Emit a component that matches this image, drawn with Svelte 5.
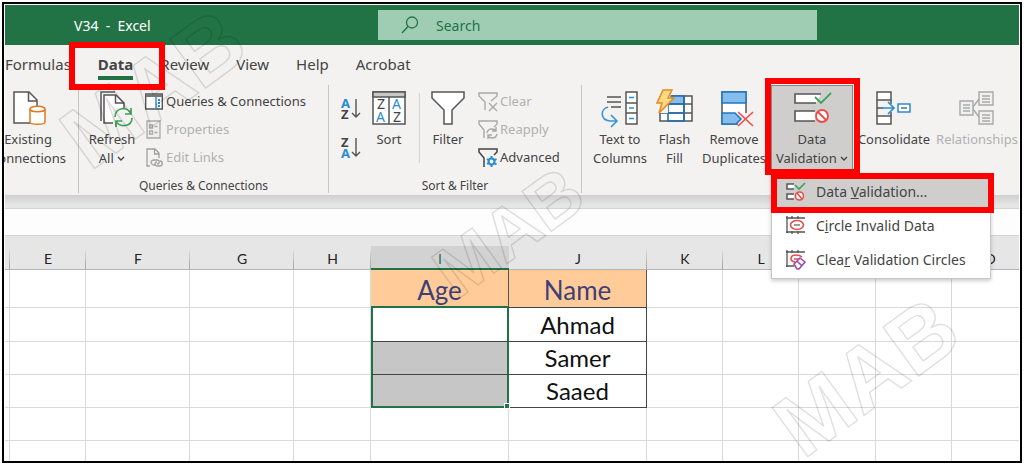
<script>
  let tabs = ['Formulas', 'Data', 'Review', 'View', 'Help', 'Acrobat'];
  let active = $state('Data');
  let menuOpen = $state(true);
  let search = $state('');

  // the first column is scrolled almost out of view
  let columns = [
    { name: '', width: 5 },
    { name: 'E', width: 76 },
    { name: 'F', width: 104 },
    { name: 'G', width: 104 },
    { name: 'H', width: 77 },
    { name: 'I', width: 138 },
    { name: 'J', width: 138 },
    { name: 'K', width: 76 },
    { name: 'L', width: 76 },
    { name: 'M', width: 77 },
    { name: 'N', width: 76 },
    { name: 'O', width: 76 }
  ];

  let rows = [
    { I: 'Age', J: 'Name', kind: 'head' },
    { I: '', J: 'Ahmad', kind: 'data first' },
    { I: '', J: 'Samer', kind: 'data' },
    { I: '', J: 'Saaed', kind: 'data last' },
    { kind: 'blank' },
    { kind: 'blank cut' }
  ];

  let marks = [
    { x: 171, y: 113, size: 88 },
    { x: 523, y: 252, size: 72 },
    { x: 884, y: 401, size: 88 }
  ];
</script>

{#snippet chevron()}
  <svg class="chevron" width="8" height="6" viewBox="0 0 8 6"><path d="M1 0l3 3 3-3" fill="none" stroke="#444" stroke-width="1.4" /></svg>
{/snippet}

<div class="frame">
  <header class="titlebar">
    <span class="doc">V34&nbsp; -&nbsp; Excel</span>
    <label class="search">
      <svg width="18" height="18" viewBox="0 0 18 18" fill="none" stroke="#217346" stroke-width="1.3">
        <circle cx="11" cy="6.500" r="5.500" />
        <path d="M7 10.500L1 17" />
      </svg>
      <input type="text" placeholder="Search" aria-label="Search" bind:value={search} />
    </label>
  </header>

  <nav class="tabs">
    {#each tabs as tab}
      <button class="tab" class:active={tab === active} onclick={() => (active = tab)}>
        {tab}
        {#if tab === 'Data'}<span class="callout tab-callout"></span>{/if}
      </button>
    {/each}
  </nav>

  <div class="ribbon">
    <section class="group existing">
      <div class="body">
        <button class="big">
          <svg width="34" height="34" viewBox="0 0 34 34" fill="none">
            <path d="M3 1h15l8 8v23H3z" fill="#fff" stroke="#555" stroke-width="1.5" />
            <path d="M17.500 1v9H26" stroke="#555" stroke-width="1.5" />
            <path d="M19 18v13c0 3 15 3 15 0V18" fill="#fff" stroke="#e07a1f" stroke-width="1.5" />
            <ellipse cx="26.500" cy="18" rx="7.500" ry="2.800" fill="#fff" stroke="#e07a1f" stroke-width="1.5" />
          </svg>
          <span>Existing</span>
          <span>Connections</span>
        </button>
      </div>
    </section>

    <section class="group queries">
      <div class="body">
        <button class="big">
          <svg width="34" height="34" viewBox="0 0 34 34" fill="none">
            <path d="M6 30V1h14" stroke="#555" stroke-width="1.5" />
            <path d="M9 4h12l8 8v20H9z" fill="#fff" stroke="#555" stroke-width="1.5" />
            <path d="M20.500 4v8H29" stroke="#555" stroke-width="1.500" />
            <path d="M18 17h20v19H18z" fill="#f3f2f1" />
            <path d="M20 26c0-10 13-11 16-3M36 17v6h-6M37 27c0 9-13 10-16 3M21 36v-6h6" stroke="#3fa35a" stroke-width="1.7" />
          </svg>
          <span>Refresh</span>
          <span>All {@render chevron()}</span>
        </button>
        <div class="list">
          <button class="small">
            <svg width="19" height="19" viewBox="0 0 19 19" fill="none">
              <path d="M.7 2h16.600v15H.7z" fill="#fff" stroke="#555" stroke-width="1.4" />
              <path d="M1 2h16v3H1z" fill="#777" />
              <path d="M11 5v12" stroke="#2b8ccf" stroke-width="1.500" />
              <path d="M14 7v2M14 10v2M14 13v2" stroke="#2b8ccf" stroke-width="2" />
            </svg>
            Queries &amp; Connections
          </button>
          <button class="small" disabled>
            <svg width="19" height="19" viewBox="0 0 19 19" fill="none" stroke="#a9a9a9" stroke-width="1.3">
              <path d="M2 1h13v17H2z" fill="#eee" />
              <path d="M4.500 5h3v3h-3zM4.500 11h3v3h-3zM9.500 6.500h3M9.500 12.500h3" />
            </svg>
            Properties
          </button>
          <button class="small" disabled>
            <svg width="19" height="19" viewBox="0 0 19 19" fill="none" stroke="#a0a0a0" stroke-width="1.3">
              <path d="M5 18H2V1h8l4 4v5M9.500 1v5H14" />
              <path d="M10 17c-5 0-5-5-1-5h3c3 0 3 4 0 4M12 14c-3 0-2 4 0 4h3c3 0 3-5 0-5" />
            </svg>
            Edit Links
          </button>
        </div>
      </div>
      <h2>Queries &amp; Connections</h2>
    </section>

    <section class="group sorting">
      <div class="body">
        <div class="orders">
          <button aria-label="Sort A to Z">
            <svg width="20" height="26" viewBox="0 0 20 26">
              <text x="0" y="12" class="glyph blue">A</text>
              <text x="0" y="23" class="glyph">Z</text>
              <path d="M15 3v18M11 17l4 4 4-4" fill="none" stroke="#555" stroke-width="1.4" />
            </svg>
          </button>
          <button aria-label="Sort Z to A">
            <svg width="20" height="26" viewBox="0 0 20 26">
              <text x="0" y="12" class="glyph">Z</text>
              <text x="0" y="23" class="glyph blue">A</text>
              <path d="M15 3v18M11 17l4 4 4-4" fill="none" stroke="#555" stroke-width="1.4" />
            </svg>
          </button>
        </div>
        <button class="big sort">
          <svg width="34" height="34" viewBox="0 0 34 34">
            <path d="M1 1h32v32H1z" fill="#fff" stroke="#555" stroke-width="1.5" />
            <path d="M1 1h32v5H1z" fill="#c8c8c8" stroke="#555" stroke-width="1.5" />
            <path d="M17 6v27" stroke="#555" stroke-width="1.5" />
            <text x="5" y="18" class="letter">Z</text>
            <text x="4" y="31" class="letter blue">A</text>
            <text x="20" y="18" class="letter blue">A</text>
            <text x="21" y="31" class="letter">Z</text>
          </svg>
          <span>Sort</span>
        </button>
        <i class="rule"></i>
        <button class="big filter">
          <svg width="34" height="34" viewBox="0 0 34 34">
            <path d="M1 1h32v6L21 19v14h-8V19L1 7z" fill="#fff" stroke="#555" stroke-width="1.5" />
          </svg>
          <span>Filter</span>
        </button>
        <div class="list">
          <button class="small" disabled>
            <svg width="19" height="19" viewBox="0 0 19 19" fill="none" stroke="#a9a9a9" stroke-width="1.4">
              <path d="M7 18V10L1 4V1h18v3l-6 5M11 11l8 8M19 11l-8 8" />
            </svg>
            Clear
          </button>
          <button class="small" disabled>
            <svg width="19" height="19" viewBox="0 0 19 19" fill="none" stroke="#a9a9a9" stroke-width="1.4">
              <path d="M6 18V10L1 4V1h18v3l-3 3" />
              <path d="M9 13c1-5 7-5 9-2M18 7v4h-4M19 14c-1 5-7 5-9 2M10 19v-4h4" />
            </svg>
            Reapply
          </button>
          <button class="small">
            <svg width="19" height="19" viewBox="0 0 19 19" fill="none" stroke="#444" stroke-width="1.5">
              <path d="M6 19V10L1 4V1h18v3l-3 3" />
              <circle cx="13.500" cy="13.500" r="3" stroke="#2b8ccf" stroke-width="2" />
              <path d="M13.500 8v3M13.500 16v3M9 11l2.500 1.500M16 15l2.500 1.500M9 16l2.500-1.500M16 12.500l2.500-1.500" stroke="#2b8ccf" stroke-width="2" />
            </svg>
            Advanced
          </button>
        </div>
      </div>
      <h2>Sort &amp; Filter</h2>
    </section>

    <section class="group tools">
      <div class="body">
        <button class="big columns">
          <svg width="36" height="34" viewBox="0 0 36 34" fill="none">
            <path d="M5 6h14M5 11h14M9 16h10" stroke="#555" stroke-width="1.5" />
            <path d="M24 1h11v32H24zM24 12h11M24 22h11" fill="#fff" stroke="#555" stroke-width="1.5" />
            <path d="M27 6.500h5M27 17h5M27 27.500h5" stroke="#2b8ccf" stroke-width="1.500" />
            <path d="M6 16C-2 18-2 29 8 30h7M9 24l6 6-6 6" stroke="#3a94d4" stroke-width="1.600" />
          </svg>
          <span>Text to</span>
          <span>Columns</span>
        </button>
        <button class="big flash">
          <svg width="36" height="34" viewBox="0 0 36 34" fill="none">
            <path d="M3 5h32v25H3z" fill="#fff" stroke="#555" stroke-width="1.500" />
            <path d="M11 5h16v8H11z" fill="#85bdeb" />
            <path d="M3 13h32M3 22h32M27 5v25" stroke="#555" stroke-width="1.500" />
            <path d="M11 30V5h16v25zM11 13h16M11 22h16" stroke="#1f6fb5" stroke-width="1.600" />
            <path d="M0 0h15l-4 13v9H0z" fill="#f3f2f1" />
            <path d="M6-1h9l-4 8h6L2 22l3-10H0z" fill="#ffd983" stroke="#e58a1f" stroke-width="1.500" />
          </svg>
          <span>Flash</span>
          <span>Fill</span>
        </button>
        <button class="big remove">
          <svg width="36" height="34" viewBox="0 0 36 34" fill="none">
            <path d="M6 1h24v32H6z" fill="#fff" stroke="#555" stroke-width="1.500" />
            <path d="M6 1h24v11H6z" fill="#85bdeb" stroke="#1f78c1" stroke-width="1.500" />
            <path d="M22 22h16v14H22z" fill="#f3f2f1" />
            <path d="M6 22h13l6 6-5 5H6z" fill="#85bdeb" stroke="#1f78c1" stroke-width="1.500" />
            <path d="M22 21l15 14M37 21L22 35" stroke="#f04b45" stroke-width="1.600" />
          </svg>
          <span>Remove</span>
          <span>Duplicates</span>
        </button>
        <div class="dropdown">
          <button class="big pressed" aria-expanded={menuOpen} onclick={() => (menuOpen = !menuOpen)}>
            <svg width="38" height="34" viewBox="0 0 38 34" fill="none">
              <path d="M28 3H2v9h21" fill="#fff" stroke="#555" stroke-width="1.600" />
              <path d="M22 20H2v10h20" fill="#fff" stroke="#555" stroke-width="1.600" />
              <path d="M22 6l6 6L38 2" stroke="#3fa35a" stroke-width="1.800" />
              <circle cx="29" cy="25" r="6" fill="#fff" stroke="#f04b45" stroke-width="1.800" />
              <path d="M25 21l8 8" stroke="#f04b45" stroke-width="1.800" />
            </svg>
            <span>Data</span>
            <span>Validation {@render chevron()}</span>
          </button>
          <span class="callout button-callout"></span>
          {#if menuOpen}
            <div class="menu" role="menu">
              <button class="item hover" role="menuitem">
                <svg width="19" height="19" viewBox="0 0 19 19" fill="none">
                  <path d="M8 2H1v5h7M8 12H1v5h7" fill="#fff" stroke="#555" stroke-width="1.500" />
                  <path d="M9 3l4 4 6-6" stroke="#3fa35a" stroke-width="1.700" />
                  <circle cx="13.500" cy="14" r="4" fill="#fff" stroke="#f04b45" stroke-width="1.600" />
                  <path d="M11 11l5 6" stroke="#f04b45" stroke-width="1.500" />
                </svg>
                <span>Data <u>V</u>alidation...</span>
                <span class="callout item-callout"></span>
              </button>
              <button class="item" role="menuitem">
                <svg width="19" height="19" viewBox="0 0 19 19" fill="none">
                  <path d="M1 0v17M0 2h19M0 16h19M6 0v3M12 0v3M6 15v3M12 15v3" stroke="#555" stroke-width="1.300" />
                  <ellipse cx="11" cy="9" rx="6.500" ry="4.500" fill="#fff" stroke="#f04b45" stroke-width="1.600" />
                  <path d="M8 9h6" stroke="#666" stroke-width="1.300" />
                </svg>
                <span>C<u>i</u>rcle Invalid Data</span>
              </button>
              <button class="item" role="menuitem">
                <svg width="19" height="19" viewBox="0 0 19 19" fill="none">
                  <path d="M1 0v17M0 2h19M0 16h8M6 0v3M12 0v3" stroke="#555" stroke-width="1.300" />
                  <path d="M9 12C3 11 4 5 10 5c3 0 5 1 6 2M8 9h5" stroke="#f04b45" stroke-width="1.600" />
                  <path d="M8 14l6-6 5 4-6 7h-2zM11 11l5 5" fill="#fff" stroke="#9a4bb0" stroke-width="1.600" />
                </svg>
                <span>Clea<u>r</u> Validation Circles</span>
              </button>
            </div>
          {/if}
        </div>
        <button class="big consolidate">
          <svg width="36" height="34" viewBox="0 0 36 34" fill="none">
            <path d="M1 1h14v8H1zM1 25h14v8H1z" fill="#fff" stroke="#555" stroke-width="1.500" />
            <path d="M1 9v16M1 17h6M15 9v4M15 21v4" stroke="#555" stroke-width="1.500" />
            <path d="M6 17h12M12 11l6 6-6 6" stroke="#2b8ccf" stroke-width="1.600" />
            <path d="M22 13h12v8H22z" fill="#fff" stroke="#2b8ccf" stroke-width="1.500" />
            <path d="M25 17h6" stroke="#555" stroke-width="1.300" />
          </svg>
          <span>Consolidate</span>
        </button>
        <button class="big relations" disabled>
          <svg width="36" height="34" viewBox="0 0 36 34" fill="#f0f0f0" stroke="#a9a9a9" stroke-width="1.400">
            <path d="M1 10h13v14H1zM20 1h14v13H20zM20 20h14v13H20z" />
            <path d="M4 14h7M4 17h7M4 20h7M23 5h8M23 8h8M23 11h8M23 24h8M23 27h8M23 30h8M14 16l6-8M14 18l6 8" />
          </svg>
          <span>Relationships</span>
        </button>
      </div>
    </section>
  </div>

  <div class="shade"></div>
  <div class="formula"></div>

  <div class="sheet">
    <table>
      <colgroup>
        {#each columns as col}
          <col style="width: {col.width}px" />
        {/each}
      </colgroup>
      <thead>
        <tr>
          {#each columns as col}
            <th class:selected={col.name === 'I'}>{col.name}</th>
          {/each}
        </tr>
      </thead>
      <tbody>
        {#each rows as row}
          <tr class={row.kind}>
            {#each columns as col}
              <td class={col.name === 'I' ? 'age' : col.name === 'J' ? 'name' : ''}>
                {row[col.name] ?? ''}
                {#if row.kind === 'data last' && col.name === 'I'}<span class="handle"></span>{/if}
              </td>
            {/each}
          </tr>
        {/each}
      </tbody>
    </table>
  </div>

  <svg class="watermark" aria-hidden="true">
    {#each marks as mark}
      <text transform="translate({mark.x} {mark.y}) rotate(-36)" font-size={mark.size}>MAB</text>
    {/each}
  </svg>
</div>

<style>
  :global(body) {
    margin: 0;
    background: #fff;
  }

  .frame {
    position: relative;
    margin: 2px 2px 1px;
    padding: 1px 1px 0;
    border: 2px solid #000;
    overflow: hidden;
    font-family: "Noto Sans", "Open Sans", sans-serif;
    font-size: 13px;
    color: #444;
  }

  .frame * {
    box-sizing: border-box;
  }

  button {
    margin: 0;
    padding: 0;
    border: 0;
    background: none;
    font: inherit;
    color: inherit;
    white-space: nowrap;
  }

  button:disabled {
    color: #b1b1b1;
  }

  svg {
    flex: none;
    overflow: visible;
  }

  .chevron {
    vertical-align: middle;
  }

  .callout {
    position: absolute;
    z-index: 5;
    border: 6px solid #f00;
    pointer-events: none;
  }

  .titlebar {
    display: flex;
    align-items: center;
    height: 40px;
    background: #217346;
    font-size: 14px;
    color: #fff;
  }

  .doc {
    flex: 0 0 373px;
    padding-left: 69px;
  }

  .search {
    flex: 1;
    display: flex;
    align-items: center;
    gap: 17px;
    height: 30px;
    margin-right: 202px;
    padding-left: 23px;
    background: #9fcdb3;
  }

  .search input {
    flex: 1;
    min-width: 0;
    padding: 0;
    border: 0;
    outline: 0;
    background: none;
    font: inherit;
    color: #217346;
  }

  .search input::placeholder {
    color: #217346;
    opacity: 1;
  }

  .tabs {
    display: flex;
    gap: 27px;
    height: 40px;
    background: #f3f2f1;
    font-size: 15px;
  }

  .tab {
    position: relative;
    height: 38px;
  }

  .tab.active {
    font-weight: bold;
  }

  .tab.active::after {
    content: '';
    position: absolute;
    left: 0;
    right: 0;
    bottom: 3px;
    height: 4px;
    background: #217346;
  }

  .tab-callout {
    inset: -3px -32px -7px -29px;
  }

  .ribbon {
    display: flex;
    height: 110px;
    padding-bottom: 2px;
    background: #f3f2f1;
  }

  .group {
    display: flex;
    flex-direction: column;
    border-right: 1px solid #c8c6c4;
  }

  .group h2 {
    margin: 0;
    font-size: 12px;
    font-weight: normal;
    line-height: 14px;
    text-align: center;
  }

  .existing {
    width: 74px;
  }

  .queries {
    width: 250px;
  }

  .sorting {
    width: 253px;
  }

  .tools {
    flex: 1;
    border-right: 0;
  }

  .tools .body {
    padding-left: 6px;
  }

  .body {
    display: flex;
    align-items: flex-start;
    height: 94px;
  }

  .big {
    flex: none;
    display: flex;
    flex-direction: column;
    align-items: center;
    width: 66px;
    height: 84px;
    padding-top: 6px;
    line-height: 19px;
  }

  .big > svg {
    height: 34px;
    margin-bottom: 5px;
  }

  .existing .big {
    width: 46px;
  }

  .sort {
    width: 52px;
  }

  .filter {
    width: 56px;
  }

  .columns {
    width: 64px;
  }

  .flash {
    width: 45px;
  }

  .remove {
    width: 74px;
  }

  .consolidate,
  .pressed {
    width: 82px;
  }

  .relations {
    width: 84px;
  }

  .pressed {
    height: 88px;
    background: #d0cecd;
    box-shadow: inset 0 0 0 1px #8a8886;
  }

  .list {
    display: flex;
    flex-direction: column;
    padding-top: 2px;
  }

  .small {
    display: flex;
    align-items: center;
    gap: 3px;
    height: 28px;
  }

  .queries .small {
    gap: 2px;
  }

  .sorting .list {
    padding-left: 2px;
  }

  .orders {
    display: flex;
    flex-direction: column;
    gap: 13px;
    padding: 11px 2px 0 12px;
  }

  .orders button {
    height: 26px;
  }

  .glyph {
    font-size: 13px;
    font-weight: bold;
    fill: #444;
  }

  .letter {
    font-size: 14px;
    fill: #444;
  }

  .glyph.blue,
  .letter.blue {
    fill: #2b8ccf;
  }

  .rule {
    width: 1px;
    height: 70px;
    margin: 8px 0 0 4px;
    background: #d6d4d2;
  }

  .dropdown {
    position: relative;
  }

  .button-callout {
    inset: -7px -7px -2px -6px;
  }

  .menu {
    position: absolute;
    z-index: 4;
    top: 88px;
    left: 0;
    width: 220px;
    padding-bottom: 2px;
    border: 1px solid #c6c6c6;
    background: #fff;
    box-shadow: 0 2px 4px rgba(0, 0, 0, 0.2);
    font-size: 14px;
  }

  .item {
    position: relative;
    display: flex;
    align-items: center;
    gap: 11px;
    width: 100%;
    height: 34px;
    padding-left: 14px;
  }

  .item.hover {
    background: #d0cecd;
  }

  .item-callout {
    inset: -1px -4px -5px -1px;
  }

  .shade {
    height: 13px;
    background: linear-gradient(#cfcfcf, #e6e6e6 80%);
  }

  .formula {
    height: 28px;
    border-top: 1px solid #d4d4d4;
    border-bottom: 1px solid #d4d4d4;
    background: #fdfdfd;
  }

  .sheet {
    overflow: hidden;
    background: #fff;
  }

  table {
    width: 1023px;
    table-layout: fixed;
    border-collapse: separate;
    border-spacing: 0;
    font-family: Lato, sans-serif;
  }

  th {
    height: 34px;
    padding: 12px 0 0;
    border-bottom: 1px solid #b4b4b4;
    background: linear-gradient(#e6e6e6, #a0a0a0) right bottom / 1px 22px no-repeat #e6e6e6;
    font-size: 14px;
    font-weight: normal;
    color: #222;
  }

  th.selected {
    border-bottom: 2px solid #217346;
    background: linear-gradient(#d2d2d2, #d2d2d2) bottom / 100% 22px no-repeat #e6e6e6;
    color: #217346;
  }

  td {
    position: relative;
    height: 33px;
    padding: 0;
    border-right: 1px solid #d9d9d9;
    border-bottom: 1px solid #d9d9d9;
    font-size: 24px;
    line-height: 28px;
    text-align: center;
    color: #111;
  }

  .head td {
    height: 38px;
    padding-top: 3px;
  }

  .first td {
    height: 34px;
  }

  .cut td {
    height: 20px;
    border-bottom: 0;
  }

  .head .age,
  .head .name {
    border-right-color: #555;
    border-bottom-color: #444;
    background: #ffcc99;
    font-size: 26px;
    color: #3f3f76;
  }

  .head .age {
    border-bottom: 2px solid #217346;
  }

  .data .name {
    border-right-color: #444;
    border-bottom-color: #444;
  }

  .data .age {
    border-right: 2px solid #217346;
    border-bottom-color: #444;
    border-left: 2px solid #217346;
    background: #c6c6c6;
  }

  .first .age {
    background: #fff;
  }

  .last .age {
    border-bottom: 2px solid #217346;
  }

  .handle {
    position: absolute;
    right: -3px;
    bottom: -3px;
    z-index: 1;
    width: 6px;
    height: 6px;
    border: 1px solid #fff;
    background: #217346;
  }

  .watermark {
    position: absolute;
    inset: -4px;
    z-index: 3;
    width: 100%;
    height: 100%;
    pointer-events: none;
  }

  .watermark text {
    font-family: "Liberation Sans", sans-serif;
    font-weight: bold;
    text-anchor: middle;
    fill: none;
    stroke: rgba(0, 0, 0, 0.12);
    stroke-width: 1.5px;
    stroke-linejoin: round;
  }
</style>
